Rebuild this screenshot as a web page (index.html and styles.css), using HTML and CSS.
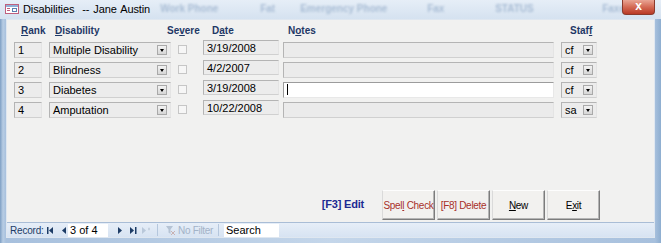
FILE: index.html
```html
<!DOCTYPE html>
<html lang="en">
<head>
    <meta charset="UTF-8">
    <title>Disabilities -- Jane Austin</title>
    <link rel="stylesheet" href="styles.css">
</head>
<body>
    <div class="window">
        <div class="titlebar">
            <svg class="title-icon" width="14" height="10" viewBox="0 0 14 10">
                <rect x="0.5" y="0.5" width="13" height="9" fill="#fff" stroke="#c0607e"/>
                <rect x="1" y="1" width="12" height="2" fill="#8fb0d8"/>
                <rect x="2" y="4" width="3" height="1" fill="#c0607e"/>
                <rect x="2" y="6" width="3" height="1" fill="#c0607e"/>
                <rect x="7.5" y="4.5" width="4" height="3" fill="none" stroke="#5a7fb0"/>
            </svg>
            <span class="title-text">Disabilities &nbsp;-- Jane Austin</span>
            <div class="behind">
                <span class="b1">Work Phone</span><span class="b2">Fat</span><span class="b3">Emergency Phone</span><span class="b4">Fax</span><span class="b5">STATUS</span><span>Faxed</span>
            </div>
            <div class="close-btn">x</div>
        </div>

        <div class="client">
            <div class="head-row">
                <span class="h-rank"><u>R</u>ank</span>
                <span class="h-dis"><u>D</u>isability</span>
                <span class="h-sev">Se<u>v</u>ere</span>
                <span class="h-date">D<u>a</u>te</span>
                <span class="h-notes">N<u>o</u>tes</span>
                <span class="h-staff">Staf<u>f</u></span>
            </div>

            <div class="row">
                <div class="box rank">1</div>
                <div class="box combo dis">Multiple Disability<span class="drop"></span></div>
                <div class="sev"><span class="check"></span></div>
                <div class="box date">3/19/2008</div>
                <div class="box notes"></div>
                <div class="box combo staff">cf<span class="drop"></span></div>
            </div>
            <div class="row">
                <div class="box rank">2</div>
                <div class="box combo dis">Blindness<span class="drop"></span></div>
                <div class="sev"><span class="check"></span></div>
                <div class="box date">4/2/2007</div>
                <div class="box notes"></div>
                <div class="box combo staff">cf<span class="drop"></span></div>
            </div>
            <div class="row">
                <div class="box rank">3</div>
                <div class="box combo dis">Diabetes<span class="drop"></span></div>
                <div class="sev"><span class="check"></span></div>
                <div class="box date">3/19/2008</div>
                <div class="box notes active"><span class="caret"></span></div>
                <div class="box combo staff">cf<span class="drop"></span></div>
            </div>
            <div class="row">
                <div class="box rank">4</div>
                <div class="box combo dis">Amputation<span class="drop"></span></div>
                <div class="sev"><span class="check"></span></div>
                <div class="box date">10/22/2008</div>
                <div class="box notes"></div>
                <div class="box combo staff">sa<span class="drop"></span></div>
            </div>

            <div class="spacer"></div>

            <div class="button-bar">
                <span class="edit-label">[F3] Edit</span>
                <button class="btn red">Spel<u>l</u> Check</button>
                <button class="btn red">[F8] Delete</button>
                <button class="btn"><u>N</u>ew</button>
                <button class="btn">E<u>x</u>it</button>
            </div>

            <div class="statusbar">
                <span class="rec-label">Record:</span>
                <svg class="nav" width="7" height="7" viewBox="0 0 7 7"><rect x="0" y="0" width="1.5" height="7" fill="#1d3c66"/><path d="M6 0 L2 3.5 L6 7 Z" fill="#1d3c66"/></svg>
                <svg class="nav prev" width="5" height="7" viewBox="0 0 5 7"><path d="M4 0 L0 3.5 L4 7 Z" fill="#1d3c66"/></svg>
                <span class="rec-box">3 of 4</span>
                <svg class="nav next" width="5" height="7" viewBox="0 0 5 7"><path d="M1 0 L5 3.5 L1 7 Z" fill="#1d3c66"/></svg>
                <svg class="nav last" width="7" height="7" viewBox="0 0 7 7"><path d="M0 0 L4 3.5 L0 7 Z" fill="#1d3c66"/><rect x="5" y="0" width="1.5" height="7" fill="#1d3c66"/></svg>
                <svg class="nav newrec" width="9" height="7" viewBox="0 0 9 7"><path d="M0 0 L4 3.5 L0 7 Z" fill="#b9c8da"/><path d="M6 1 L8 3 M8 1 L6 3 M7 0.5 V3.5" stroke="#c6d2e0" stroke-width="1"/></svg>
                <span class="sep"></span>
                <svg class="funnel" width="9" height="9" viewBox="0 0 9 9"><path d="M0 0 H7 L4.5 3.5 V8 L2.5 6.5 V3.5 Z" fill="#b5c3d4"/><path d="M5 5 L9 9 M9 5 L5 9" stroke="#c9b2b2" stroke-width="1"/></svg>
                <span class="filter">No Filter</span>
                <span class="sep sep2"></span>
                <span class="search">Search</span>
            </div>
        </div>
    </div>
</body>
</html>
```

FILE: styles.css
```css
body { margin: 0; font-family: "Liberation Sans", Arial, sans-serif; background: #b9cde4; }
.window { width: 661px; height: 243px; display: flex; flex-direction: column; background: linear-gradient(to right, #7e9fc4 0px, #b8cde4 3px, #a7c0dd 6px, #c4d6ea 50%, #a7c0dd 655px, #8eaed0 661px); overflow: hidden; }

.titlebar { height: 19px; flex-shrink: 0; display: flex; align-items: center; background: linear-gradient(#e6eef7, #d5e2f0); position: relative; white-space: nowrap; overflow: hidden; }
.title-icon { flex-shrink: 0; margin: 0 4px 2px 5px; }
.title-text { flex-shrink: 0; font-size: 11px; letter-spacing: -0.1px; word-spacing: 1px; color: #000; margin-bottom: 2px; }
.behind { display: flex; flex-shrink: 0; color: #a9bdd5; font-size: 10px; font-weight: bold; filter: blur(1.3px); margin-left: 10px; margin-bottom: 2px; }
.b1 { width: 100px; }
.b2 { width: 40px; }
.b3 { width: 127px; }
.b4 { width: 68px; }
.b5 { width: 107px; }
.close-btn { position: absolute; right: 6px; top: 0; width: 33px; height: 15px; box-sizing: border-box; border: 1px solid #8a3a2c; border-top: none; border-radius: 0 0 4px 4px; background: linear-gradient(#e9a594, #d46a55 50%, #b93a26); color: #fff; font-weight: bold; font-size: 12px; text-align: center; line-height: 12px; }

.client { flex: 1; margin: 0 6px 5px 6px; background: #f1f1f0; border: 1px solid #dfe7f0; display: flex; flex-direction: column; }

.head-row { display: flex; padding: 5px 0 0 14px; height: 15px; font-size: 10px; font-weight: bold; color: #1f3866; white-space: nowrap; }
.h-rank { width: 34px; }
.h-dis { width: 112px; }
.h-sev { width: 45px; }
.h-date { width: 76px; }
.h-notes { width: 282px; }

.row { display: flex; align-items: flex-start; height: 20px; padding-left: 7px; font-size: 11px; }
.box { box-sizing: border-box; height: 16px; line-height: 14px; padding-left: 3px; background: #ececec; border: 1px solid; border-color: #b4b4b4 #e4e4e4 #d0d0d0 #b4b4b4; white-space: nowrap; margin-top: 2px; }
.rank { width: 28px; }
.dis { width: 122px; margin-left: 7px; }
.sev { width: 32px; }
.check { display: block; width: 9px; height: 9px; margin: 5px 0 0 7px; border: 1px solid #c6c6c6; background: #f6f6f6; box-sizing: border-box; }
.date { width: 76px; margin-top: 0; height: 15px; }
.notes { width: 271px; margin-left: 4px; background: #ebebeb; }
.notes.active { background: #fff; border-color: #9c9c9c #e8e8e8 #e8e8e8 #9c9c9c; }
.caret { display: block; width: 1px; height: 11px; background: #000; margin-top: 1px; }
.staff { width: 36px; margin-left: 7px; }

.combo { position: relative; }
.drop { position: absolute; right: 3px; top: 2px; width: 10px; height: 10px; box-sizing: border-box; border: 1px solid #a9a9a9; background: linear-gradient(#f2f2f2, #d6d6d6); }
.drop::after { content: ""; position: absolute; left: 2px; top: 3px; border-left: 2.5px solid transparent; border-right: 2.5px solid transparent; border-top: 3px solid #000; }

.spacer { flex: 1; }

.button-bar { display: flex; align-items: center; justify-content: flex-end; padding-right: 54px; height: 30px; }
.edit-label { font-size: 11px; font-weight: bold; letter-spacing: -0.2px; color: #1c2a92; margin-right: 16px; margin-bottom: 2px; }
.btn { width: 53px; height: 30px; margin-left: 2px; padding: 0; white-space: nowrap; font-family: "Liberation Sans", Arial, sans-serif; font-size: 10px; letter-spacing: -0.3px; color: #000; background: #f2f1ef; border: 1px solid; border-color: #fdfdfd #7c7c7c #7c7c7c #dadada; box-shadow: inset -1px -1px 0 #b4b4b4; }
.btn.red { color: #a8302a; }

.statusbar { display: flex; align-items: center; height: 14px; margin-top: 2px; border-top: 1px solid #a9bdd6; background: linear-gradient(#e6eef8, #d7e3f2); font-size: 11px; color: #1d3c66; white-space: nowrap; }
.rec-label { flex-shrink: 0; margin-left: 3px; width: 37px; font-size: 10px; letter-spacing: -0.2px; }
.nav { flex-shrink: 0; }
.prev { margin-left: 8px; margin-right: 1px; }
.rec-box { width: 40px; height: 13px; background: #fff; color: #000; padding-left: 2px; line-height: 13px; box-sizing: border-box; }
.next { margin-left: 9px; }
.last { margin-left: 8px; }
.newrec { margin-left: 5px; }
.sep { width: 1px; height: 12px; background: #b5c7dd; margin: 0 6px; }
.sep2 { margin: 0 5px 0 6px; }
.funnel { margin: 0 3px 0 2px; }
.filter { color: #a3b3c8; font-size: 10px; letter-spacing: -0.3px; width: 34px; }
.search { width: 55px; height: 13px; background: #fff; color: #000; padding-left: 2px; line-height: 13px; box-sizing: border-box; }
```
